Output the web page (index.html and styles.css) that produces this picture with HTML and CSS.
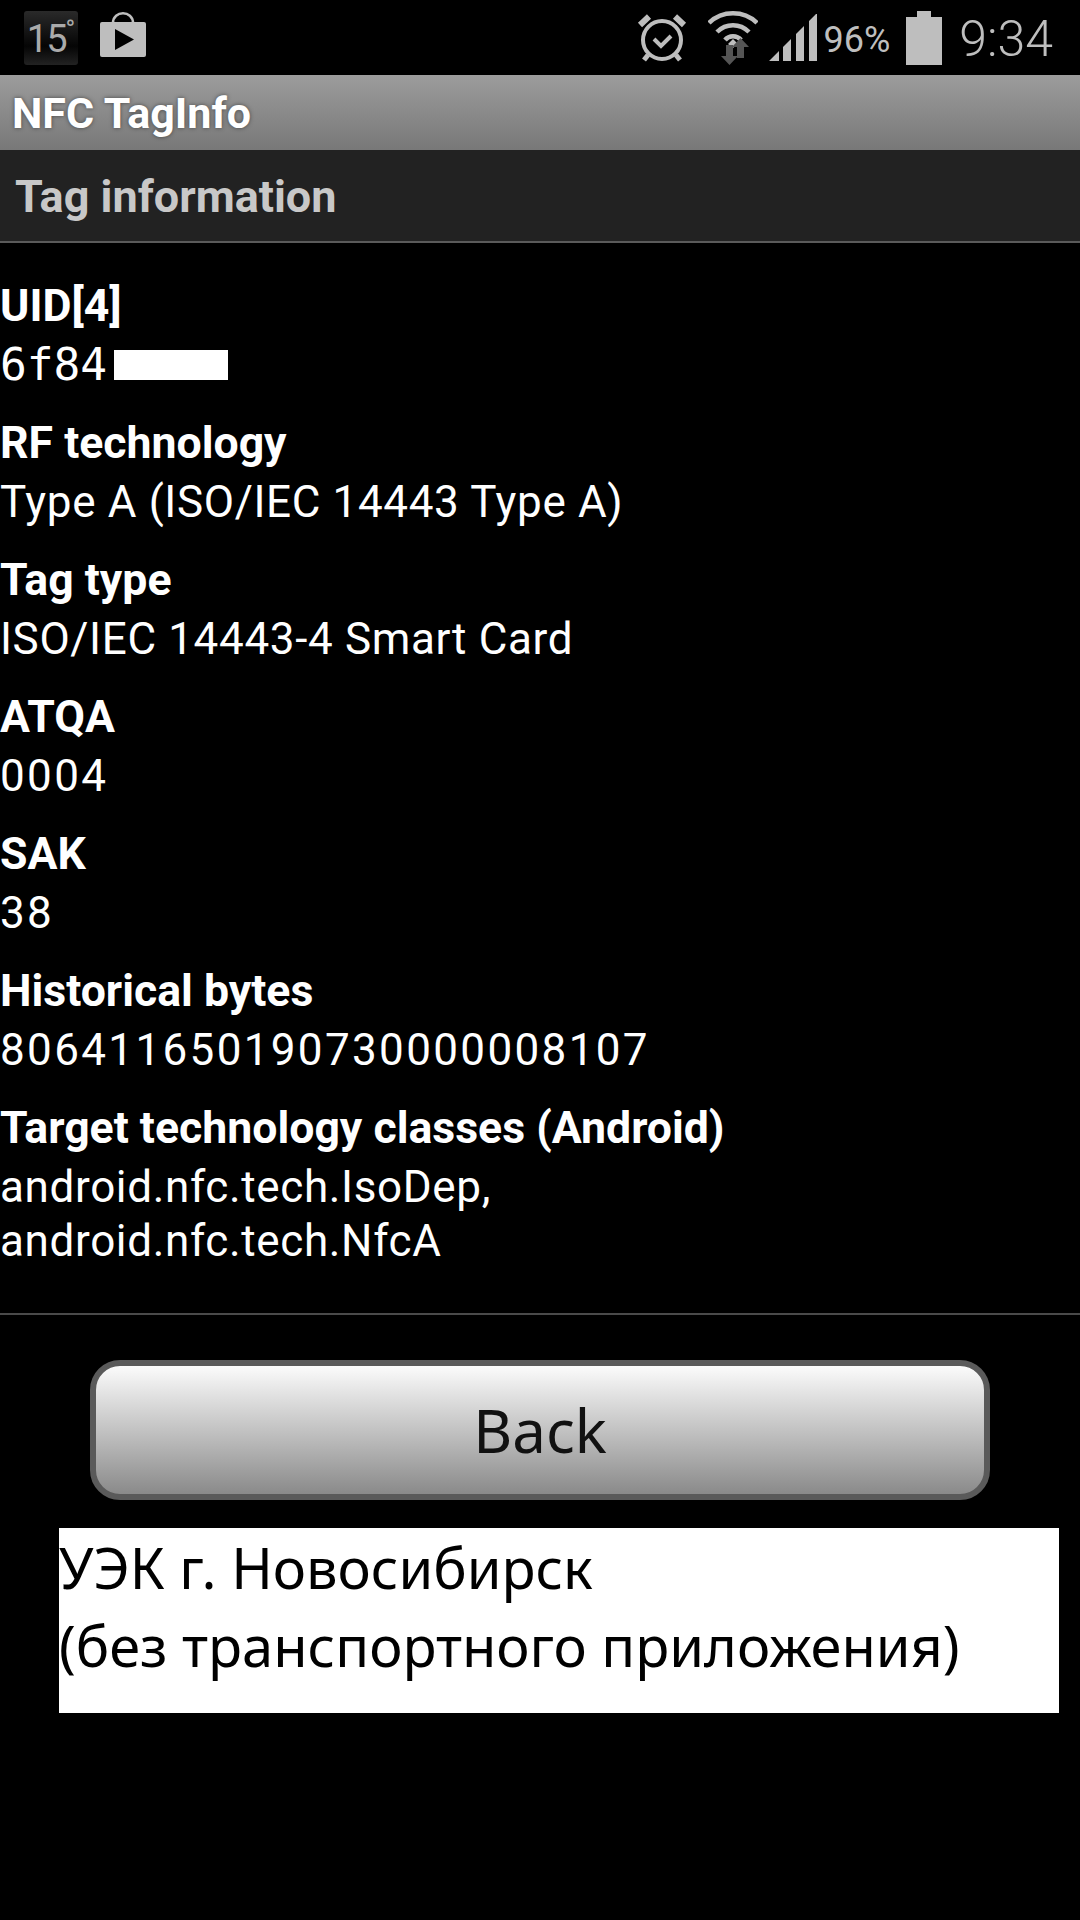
FILE: index.html
```html
<!DOCTYPE html>
<html lang="en">
<head>
    <meta charset="UTF-8">
    <meta name="viewport" content="width=device-width, initial-scale=1.0">
    <title>NFC TagInfo</title>
    <link rel="stylesheet" href="styles.css">
</head>
<body>
    <div class="status-bar">
        <div class="status-left">
            <div class="weather"><span class="weather-num">15</span><span class="weather-deg">°</span></div>
            <svg class="icon-store" width="48" height="48" viewBox="0 0 48 48">
                <path d="M14 12 C14 -1 34 -1 34 12" fill="none" stroke="#bebebe" stroke-width="2.5"/>
                <rect x="1" y="11" width="46" height="35" rx="2" fill="#bebebe"/>
                <path d="M16 18 L16 39 L35 28.5 Z" fill="#000"/>
            </svg>
        </div>
        <div class="status-right">
            <svg class="icon-alarm" width="50" height="50" viewBox="0 0 50 50">
                <circle cx="25" cy="27" r="19" fill="none" stroke="#bebebe" stroke-width="4"/>
                <path d="M3 12 L12 3.500 M47 12 L38 3.500" stroke="#bebebe" stroke-width="6" fill="none"/>
                <path d="M11 42 L7 47 M39 42 L43 47" stroke="#bebebe" stroke-width="5" fill="none"/>
                <path d="M17 26 L24 33 L34 23" stroke="#bebebe" stroke-width="4" fill="none"/>
            </svg>
            <svg class="icon-wifi" width="50" height="54" viewBox="0 0 50 54">
                <path d="M1 12 C14 -1 36 -1 49 12" fill="none" stroke="#bebebe" stroke-width="4.500"/>
                <path d="M9 21 C18 12 32 12 41 21" fill="none" stroke="#bebebe" stroke-width="4.500"/>
                <path d="M17 29 C21 24 29 24 33 29" fill="none" stroke="#bebebe" stroke-width="4.500"/>
                <path d="M20 33 L25 28 L30 33 L25 37 Z" fill="#bebebe"/>
                <path d="M18 34 H25 V45 H30 L21.500 54 L13 45 H18 Z" fill="#555"/>
                <path d="M29 47 H36 V36 H41 L32.500 27 L24 36 H29 Z" fill="#555"/>
            </svg>
            <svg class="icon-signal" width="48" height="48" viewBox="0 0 48 48">
                <path d="M0 47 L10 37 V47 Z M14 33 L22 25 V47 H14 Z M27 20 L35 12 V47 H27 Z M40 7 L48 -1 V47 H40 Z" fill="#bebebe"/>
            </svg>
            <span class="battery-text">96%</span>
            <svg class="icon-battery" width="36" height="54" viewBox="0 0 36 54">
                <path d="M11 0 H25 V6 H36 V54 H0 V6 H11 Z" fill="#bebebe"/>
            </svg>
            <span class="clock">9:34</span>
        </div>
    </div>

    <div class="action-bar">NFC TagInfo</div>
    <div class="section-head">Tag information</div>

    <div class="details">
        <div class="field">
            <div class="label">UID[4]</div>
            <div class="value uid"><span class="mono">6f84</span><span class="redacted"></span></div>
        </div>
        <div class="field">
            <div class="label">RF technology</div>
            <div class="value">Type A (ISO/IEC 14443 Type A)</div>
        </div>
        <div class="field">
            <div class="label">Tag type</div>
            <div class="value">ISO/IEC 14443-4 Smart Card</div>
        </div>
        <div class="field">
            <div class="label">ATQA</div>
            <div class="value digits">0004</div>
        </div>
        <div class="field">
            <div class="label">SAK</div>
            <div class="value digits">38</div>
        </div>
        <div class="field">
            <div class="label">Historical bytes</div>
            <div class="value digits">806411650190730000008107</div>
        </div>
        <div class="field">
            <div class="label">Target technology classes (Android)</div>
            <div class="value">android.nfc.tech.IsoDep,<br>android.nfc.tech.NfcA</div>
        </div>
    </div>

    <div class="footer">
        <button class="back-button">Back</button>
    </div>

    <div class="caption">УЭК г. Новосибирск<br>(без транспортного приложения)</div>
</body>
</html>
```

FILE: styles.css
```css
body {
    margin: 0;
    width: 1080px;
    height: 1920px;
    overflow: hidden;
    background: #000;
    color: #fff;
    font-family: Roboto, sans-serif;
}
.status-bar {
    height: 75px;
    display: flex;
    justify-content: space-between;
    align-items: center;
    padding: 0 27px 0 24px;
    box-sizing: border-box;
}
.status-left {
    display: flex;
    align-items: center;
    gap: 21px;
}
.status-right {
    display: flex;
    align-items: center;
    color: #bebebe;
}
.weather {
    width: 54px;
    height: 54px;
    border-radius: 3px;
    background: linear-gradient(#2a2a2a, #050505 65%, #222);
    color: #aaa;
    display: flex;
    justify-content: center;
    font-size: 38px;
    line-height: 56px;
}
.weather-num {
    letter-spacing: -2px;
}
.weather-deg {
    font-size: 26px;
    line-height: 36px;
}
.icon-store {
    margin-top: -5px;
}
.icon-alarm {
    margin-right: 21px;
}
.icon-wifi {
    margin-right: 11px;
}
.icon-signal {
    margin-right: 6px;
}
.battery-text {
    font-size: 36px;
    margin-right: 16px;
    margin-top: 4px;
}
.icon-battery {
    margin-right: 17px;
}
.clock {
    font-size: 50px;
    font-weight: 300;
    margin-top: 2px;
}
.action-bar {
    height: 75px;
    background: linear-gradient(#9c9c9c, #787878);
    font-size: 43px;
    font-weight: 700;
    line-height: 77px;
    padding-left: 12px;
    text-shadow: 0 0 4px rgba(0, 0, 0, 0.5);
}
.section-head {
    height: 91px;
    background: #222;
    border-bottom: 2px solid #5a5a5a;
    color: #c8c8c8;
    font-size: 45px;
    font-weight: 700;
    line-height: 94px;
    padding-left: 15px;
}
.details {
    padding-top: 31px;
    height: 1072px;
    box-sizing: border-box;
    border-bottom: 2px solid #4a4a4a;
}
.field {
    margin-bottom: 19px;
}
.label {
    font-size: 44.600px;
    font-weight: 700;
    line-height: 64px;
}
.value {
    font-size: 44px;
    line-height: 54px;
    letter-spacing: 0.65px;
}
.digits {
    letter-spacing: 2.350px;
}
.uid {
    display: flex;
    align-items: center;
}
.mono {
    font-family: "DejaVu Sans Mono", monospace;
    font-size: 44.500px;
    letter-spacing: 0;
}
.redacted {
    width: 114px;
    height: 30px;
    margin-left: 7px;
    background: #fff;
}
.footer {
    padding: 45px 90px 0;
}
.back-button {
    display: block;
    width: 900px;
    height: 140px;
    border: 6px solid #5a5a5a;
    border-radius: 30px;
    background: linear-gradient(#fbfbfb, #8a8a8a);
    color: #111;
    font-family: "Noto Sans", sans-serif;
    font-size: 60px;
}
.caption {
    width: 1000px;
    height: 185px;
    margin: 28px 0 0 59px;
    background: #fff;
    color: #000;
    font-family: "Noto Sans", sans-serif;
    font-size: 56px;
    line-height: 78px;
}
```
